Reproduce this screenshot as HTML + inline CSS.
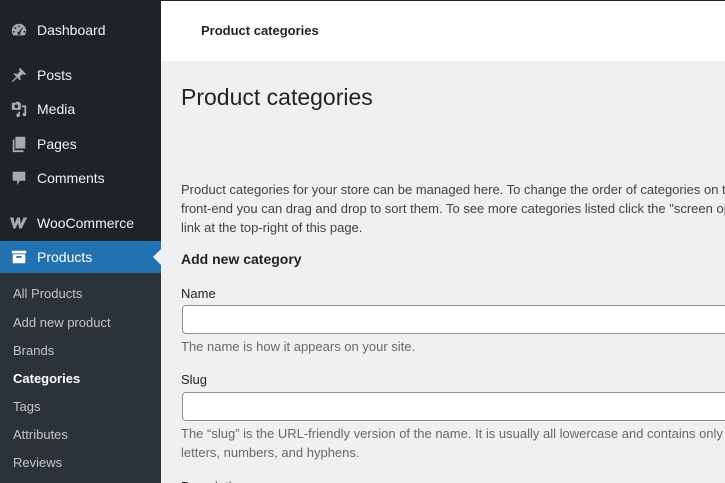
<!DOCTYPE html>
<html style="width:725px;height:483px;overflow:hidden"><head><meta charset="utf-8"><style>
*{margin:0;padding:0;box-sizing:border-box}
html,body{width:725px;height:483px;overflow:hidden}
body{background:#f0f0f1;font-family:"Liberation Sans",sans-serif;position:relative;color:#1d2327}
.sb{position:absolute;left:0;top:0;width:161px;height:483px;background:#1d2327}
.sub{position:absolute;left:0;top:273px;width:161px;height:210px;background:#2c3338}
.mi{position:absolute;left:37px;color:#f0f0f1;font-size:14px;line-height:18px}
.ic{position:absolute;left:10px;width:18px;height:18px}
.si{position:absolute;left:13px;color:#c3c4c7;font-size:13px;line-height:16px}
.prod{position:absolute;left:0;top:241px;width:161px;height:32px;background:#2271b1}
.arrow{position:absolute;left:153px;top:249px;width:0;height:0;border-top:8px solid transparent;border-bottom:8px solid transparent;border-right:8px solid #f0f0f1}
.hdr{position:absolute;left:161px;top:1px;width:564px;height:60px;background:#fff}
.topline{position:absolute;left:0;top:0;width:725px;height:1px;background:#1d2327}
.t{position:absolute;white-space:nowrap}
.inp{position:absolute;left:182px;width:560px;height:29px;background:#fff;border:1px solid #8c8f94;border-radius:4px}
.p{font-size:13px;color:#3c434a;line-height:19px}
.d{font-size:13px;color:#646970}
.clip{position:absolute;left:0;top:0;width:725px;height:483px;overflow:hidden}
</style></head><body><div class="clip">
<div class="topline"></div>
<div class="sb"></div>
<div class="sub"></div>
<div class="prod"></div>
<div class="arrow"></div>

<svg class="ic" style="top:21px" viewBox="0 0 20 20"><path fill="#a7aaad" d="M10 3a8 8 0 0 0-8 8c0 2 .7 3.7 1.8 5h12.4A8 8 0 0 0 10 3zm0 2a1 1 0 1 1 0 2 1 1 0 0 1 0-2zm-4 2a1 1 0 1 1 0 2 1 1 0 0 1 0-2zm8.5.5-3 5a1.8 1.8 0 1 1-1.3-.8l3.5-4.6zM4 11a1 1 0 1 1 0 2 1 1 0 0 1 0-2zm12 0a1 1 0 1 1 0 2 1 1 0 0 1 0-2z"/></svg>
<div class="mi" style="top:21px">Dashboard</div>
<svg class="ic" style="top:66px" viewBox="0 0 20 20"><path fill="#a7aaad" d="M11 2l7 7-2 1-2-1-3 3 1 3-1 1-3-3-5 5-1-1 5-5-3-3 1-1 3 1 3-3-1-2z"/></svg>
<div class="mi" style="top:66px">Posts</div>
<svg class="ic" style="top:100px" viewBox="0 0 20 20"><path fill="#a7aaad" d="M2 3h4l1-1h3l1 1h1v8H2zm5 2a2 2 0 1 0 0 4 2 2 0 0 0 0-4zm6 1h5v10a2 2 0 1 1-2-2V8h-3zm-4 7h2v4a2 2 0 1 1-2-2z"/></svg>
<div class="mi" style="top:100px">Media</div>
<svg class="ic" style="top:135px" viewBox="0 0 20 20"><path fill="#a7aaad" d="M6 2h11v13H6zM3 5h2v12h10v2H3z"/></svg>
<div class="mi" style="top:135px">Pages</div>
<svg class="ic" style="top:169px" viewBox="0 0 20 20"><path fill="#a7aaad" d="M3 3h14v10h-6l-3 5v-5H3z"/></svg>
<div class="mi" style="top:169px">Comments</div>
<svg class="ic" style="top:214px;width:20px;left:9px" viewBox="0 0 22 14"><path fill="#a7aaad" d="M1 1h4l1 7 3-7h3l1 7 3-7h4l-6 12h-3l-1-6-3 6H5z"/></svg>
<div class="mi" style="top:214px">WooCommerce</div>
<svg class="ic" style="top:248px" viewBox="0 0 20 20"><path fill="#fff" d="M2 3h16v3H2zm1 4h14v10H3zm4 2v2h6V9z"/></svg>
<div class="mi" style="top:248px;color:#fff">Products</div>

<div class="si" style="top:286px">All Products</div>
<div class="si" style="top:315px">Add new product</div>
<div class="si" style="top:343px">Brands</div>
<div class="si" style="top:371px;color:#fff;font-weight:bold">Categories</div>
<div class="si" style="top:399px">Tags</div>
<div class="si" style="top:427px">Attributes</div>
<div class="si" style="top:455px">Reviews</div>

<div class="hdr"></div>
<div class="t" style="left:201px;top:23px;font-size:13px;font-weight:bold;color:#1d2327">Product categories</div>
<div class="t" style="left:181px;top:84px;font-size:23px;color:#1d2327">Product categories</div>

<div class="t p" style="left:181px;top:180px">Product categories for your store can be managed here. To change the order of categories on the</div>
<div class="t p" style="left:181px;top:199px">front-end you can drag and drop to sort them. To see more categories listed click the "screen options"</div>
<div class="t p" style="left:181px;top:218px">link at the top-right of this page.</div>
<div class="t" style="left:181px;top:251px;font-size:14px;font-weight:bold;color:#1d2327">Add new category</div>

<div class="t" style="left:181px;top:286px;font-size:13px;color:#1d2327">Name</div>
<div class="inp" style="top:305px"></div>
<div class="t d" style="left:181px;top:339px">The name is how it appears on your site.</div>
<div class="t" style="left:181px;top:372px;font-size:13px;color:#1d2327">Slug</div>
<div class="inp" style="top:392px"></div>
<div class="t d" style="left:181px;top:426px">The “slug” is the URL-friendly version of the name. It is usually all lowercase and contains only</div>
<div class="t d" style="left:181px;top:445px">letters, numbers, and hyphens.</div>
<div class="t" style="left:181px;top:479px;font-size:13px;color:#1d2327">Description</div>
</div></body></html>
